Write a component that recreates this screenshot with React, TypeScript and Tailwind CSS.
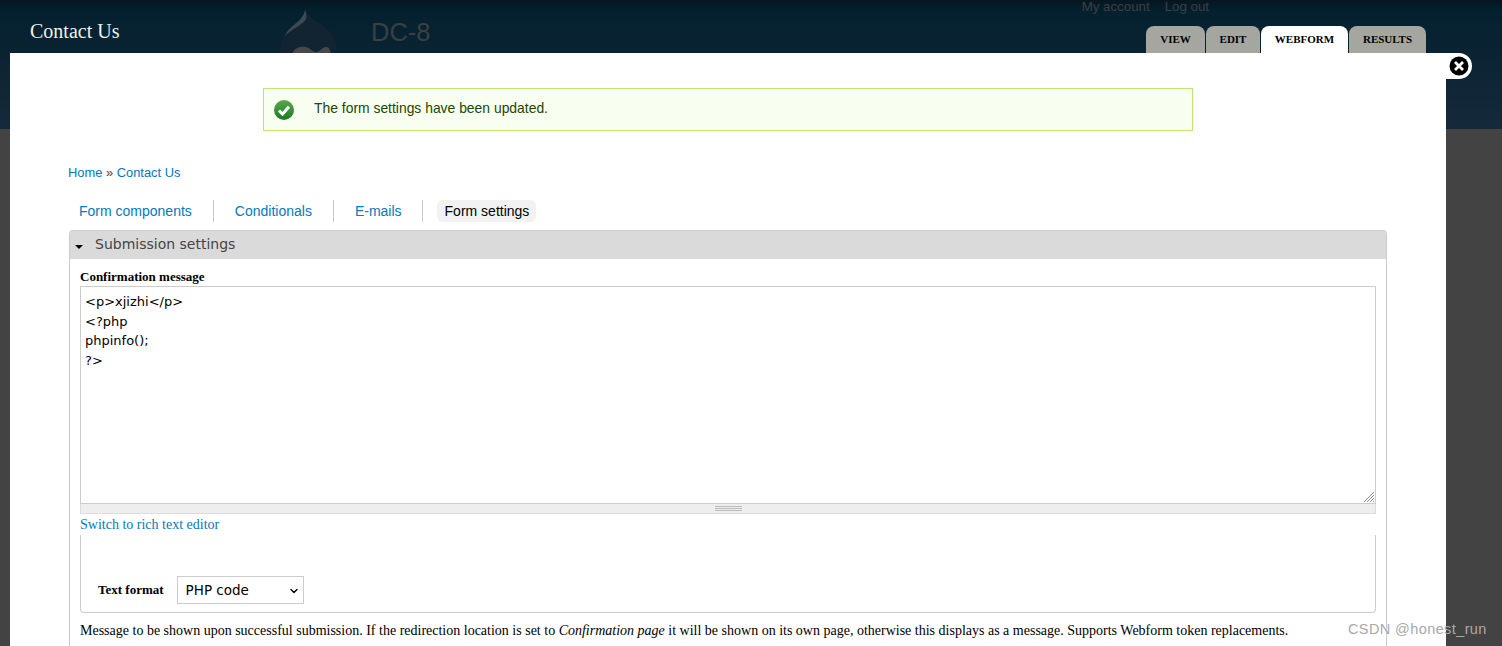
import React from "react";
import { ChevronDown } from "lucide-react";

const serif = "font-['Liberation_Serif',serif]";

const tabs = [
  { label: "VIEW", width: "w-[59px]" },
  { label: "EDIT", width: "w-[54px]" },
  { label: "WEBFORM", width: "w-[87px]", active: true },
  { label: "RESULTS", width: "w-[77px]" },
];

const DrupalDrop = () => (
  <svg width="58" height="62" viewBox="0 0 58 62" className="mt-[8px] ml-[280px] shrink-0">
    <path
      d="M25 0C26 6 30 9 36 13C48 20 57 30 57 44C57 56 45 62 28 62C12 62 0 56 0 44C0 30 8 22 17 16C22 12 25 7 25 0Z"
      fill="#122431"
    />
    <path d="M25 2C24 8 20 12 15 16C10 20 6 24 5 28C12 20 22 18 26 11C27 8 26 4 25 2Z" fill="#3c4a52" />
    <path d="M12 46C14 40 20 38 26 39C30 40 33 44 36 44C40 44 43 38 47 39C50 40 51 44 50 46L50 60L12 60Z" fill="#484848" />
  </svg>
);

const Header = () => (
  <header className="relative flex h-[129px] items-start bg-gradient-to-b from-[#06161f] via-[#04202f] via-8% to-[#15293a]">
    <h1 className={`${serif} absolute left-[30px] top-[17px] text-[20px] leading-[28px] text-[#f0f0f0]`}>
      Contact Us
    </h1>
    <DrupalDrop />
    <div className="ml-[33px] mt-[16px] font-['Liberation_Sans',sans-serif] text-[25.5px] leading-[32px] text-[#3b4043]">
      DC-8
    </div>
    <div className="absolute right-[293px] top-0 flex gap-[15px] font-['Liberation_Sans',sans-serif] text-[13.3px] leading-[14px] text-[#3b4043]">
      <span>My account</span>
      <span>Log out</span>
    </div>
    <nav className="absolute left-[1146px] top-[26px] flex gap-px">
      {tabs.map((tab) => (
        <div
          key={tab.label}
          className={`${serif} ${tab.width} flex h-[27px] justify-center rounded-t-[8px] pt-[7px] text-[11px] leading-[13px] font-bold text-black ${
            tab.active ? "bg-white" : "bg-[#a6a6a0]"
          }`}
        >
          {tab.label}
        </div>
      ))}
    </nav>
  </header>
);

const subTabs = [
  { label: "Form components", pad: "pl-[10px] pr-[21px]" },
  { label: "Conditionals", pad: "pl-[21px] pr-[21px]" },
  { label: "E-mails", pad: "pl-[21px] pr-[20px]" },
];

const SubTabs = () => (
  <ul className="ml-[59px] mt-[19px] flex h-[22px] items-center text-[14px] leading-[22px] font-['Liberation_Sans',sans-serif]">
    {subTabs.map((t) => (
      <li key={t.label} className={`${t.pad} border-r border-[#c9c9c9] text-[#0678be]`}>
        {t.label}
      </li>
    ))}
    <li className="ml-[14px] rounded-[6px] bg-[#f2f2f2] pl-[8px] pr-[7px] text-black">Form settings</li>
  </ul>
);

const SubmissionFieldset = () => (
  <section className="ml-[59px] mt-[8px] w-[1318px] rounded-t-[4px] border-x border-t border-[#ccc] pb-[30px]">
    <div className="flex h-[28px] items-center rounded-t-[3px] bg-[#dadada] pb-[2px] pl-[5px] font-['DejaVu_Sans',sans-serif] text-[14px] text-[#444]">
      <span className="mr-[12px] mt-[5px] h-0 w-0 border-x-[4px] border-t-[4px] border-x-transparent border-t-black" />
      Submission settings
    </div>
    <div className="px-[10px]">
      <label className={`${serif} mt-[10px] block text-[13px] leading-[16px] font-bold text-black`}>
        Confirmation message
      </label>
      <div className="relative mt-px h-[218px] w-[1296px]">
        <textarea
          readOnly
          className="block h-[218px] w-[1296px] resize-none border border-[#ccc] bg-white px-[4px] py-[5px] font-['DejaVu_Sans',sans-serif] text-[13px] leading-[19.7px] text-black outline-none"
          value={"<p>xjizhi</p>\n<?php\nphpinfo();\n?>"}
        />
        <svg width="12" height="12" viewBox="0 0 12 12" className="absolute right-[1px] bottom-[1px]" stroke="#8a8a8a" strokeWidth="1">
          <path d="M1 11L11 1M4 11L11 4M7 11L11 7M10 11L11 10" />
        </svg>
      </div>
      <div className="flex h-[10px] w-[1296px] flex-col items-center justify-center gap-px border-b border-x border-[#ddd] bg-[#eee]">
        <span className="h-px w-[27px] bg-[#bbb]" />
        <span className="h-px w-[27px] bg-[#bbb]" />
        <span className="h-px w-[27px] bg-[#bbb]" />
      </div>
      <a className={`${serif} mt-[2px] block text-[14px] leading-[17px] text-[#0678be]`}>Switch to rich text editor</a>
      <div className="mt-[2px] flex h-[78px] w-[1296px] items-end rounded-b-[4px] border-x border-b border-[#ccc] pb-[8px] pl-[17px]">
        <label className={`${serif} mr-[13px] mb-[6px] text-[13px] leading-[16px] font-bold text-black`}>
          Text format
        </label>
        <div className="relative">
          <select
            defaultValue="php"
            className="block h-[28px] w-[127px] appearance-none border border-[#ccc] bg-white pl-[8px] font-['DejaVu_Sans',sans-serif] text-[13.5px] text-black"
          >
            <option value="php">PHP code</option>
          </select>
          <ChevronDown size={12} strokeWidth={2.75} className="pointer-events-none absolute right-[4px] top-[9px] text-black" />
        </div>
      </div>
      <p className={`${serif} mt-[9px] text-[14px] leading-[17px] text-black`}>
        Message to be shown upon successful submission. If the redirection location is set to{" "}
        <em>Confirmation page</em> it will be shown on its own page, otherwise this displays as a message. Supports
        Webform token replacements.
      </p>
    </div>
  </section>
);

const Overlay = () => (
  <div className="absolute left-[10px] top-[53px] h-[593px] w-[1436px] overflow-hidden bg-white">
    <div className="mx-auto mt-[35px] flex h-[43px] w-[930px] items-center border border-[#bee76f] bg-[#f8fff0] pb-[2px] font-['Liberation_Sans',sans-serif] text-[13.9px] text-[#234600]">
      <svg width="20" height="20" viewBox="0 0 20 20" className="ml-[10px] mr-[20px] mt-[2px]">
        <defs>
          <linearGradient id="ok" x1="0" y1="0" x2="0" y2="1">
            <stop offset="0" stopColor="#5aa84a" />
            <stop offset="1" stopColor="#1c7a26" />
          </linearGradient>
        </defs>
        <circle cx="10" cy="10" r="10" fill="url(#ok)" />
        <path d="M5 10.5L8.5 14L15 6.8" fill="none" stroke="#fff" strokeWidth="3" />
      </svg>
      The form settings have been updated.
    </div>
    <div className="ml-[58px] mt-[34px] font-['Liberation_Sans',sans-serif] text-[12.9px] leading-[16px] text-[#0678be]">
      Home <span className="text-[#444]">»</span> Contact Us
    </div>
    <SubTabs />
    <SubmissionFieldset />
  </div>
);

const CloseButton = () => (
  <div className="absolute left-[1446px] top-[53px] flex h-[26px] w-[26px] items-center justify-center rounded-r-[13px] bg-white">
    <svg width="20" height="20" viewBox="0 0 20 20" className="mr-[1px]">
      <circle cx="10" cy="10" r="9.5" fill="#000" />
      <path d="M6 6L14 14M14 6L6 14" stroke="#fff" strokeWidth="2.8" />
    </svg>
  </div>
);

export default function App() {
  return (
    <div className="relative h-[646px] w-[1502px] overflow-hidden bg-[#434343]">
      <Header />
      <Overlay />
      <CloseButton />
      <div className="absolute left-[1348px] top-[619px] font-['Liberation_Sans',sans-serif] text-[14.5px] tracking-[0.4px] text-[#a9a9a9]">
        CSDN @honest_run
      </div>
    </div>
  );
}
